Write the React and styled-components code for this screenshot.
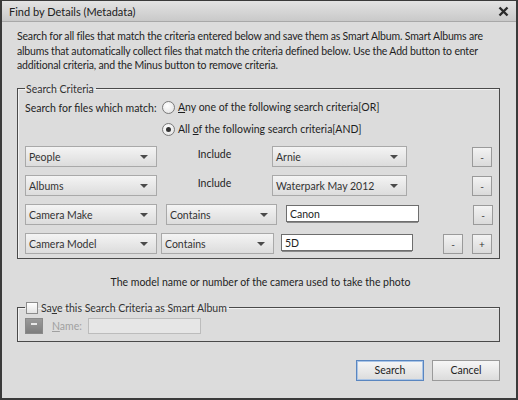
import React, { useState } from "react";
import styled, { createGlobalStyle } from "styled-components";

const GlobalStyle = createGlobalStyle`
  html, body {
    margin: 0;
    padding: 0;
    background: #3c3c3c;
  }
  body {
    font-family: Lato, "Open Sans", sans-serif;
    font-size: 10.5px;
    color: #1e1e1e;
  }
`;

const Dialog = styled.div`
  width: 518px;
  height: 400px;
  box-sizing: border-box;
  border: 2px solid #3a3a3a;
  border-top-width: 1px;
  background: #dcdcdc;
  display: flex;
  flex-direction: column;
`;

const TitleBar = styled.div`
  height: 20px;
  display: flex;
  align-items: center;
  justify-content: space-between;
  padding: 0 6px 0 7px;
  background: linear-gradient(#e3e3e3, #c9c9c9);
  border-bottom: 1px solid #a8a8a8;
  flex-shrink: 0;
`;

const Title = styled.span`
  font-size: 11px;
  color: #202020;
`;

const CloseButton = styled.button`
  border: 0;
  background: transparent;
  padding: 0;
  width: 14px;
  height: 14px;
  display: flex;
  align-items: center;
  justify-content: center;
  cursor: pointer;
`;

const Body = styled.div`
  flex: 1;
  padding: 7px 16px 0 15px;
  display: flex;
  flex-direction: column;
`;

const Intro = styled.p`
  margin: 0;
  line-height: 14.5px;
  letter-spacing: -0.18px;
  white-space: nowrap;
`;

const Group = styled.fieldset`
  margin: ${(p) => p.$mt}px 0 0 0;
  padding: ${(p) => p.$pad};
  border: 1px solid #4a4a4a;
  box-shadow: inset 1px 1px 0 #f2f2f2;
  min-width: 0;
`;

const Legend = styled.legend`
  padding: 0 2px 0 1px;
  margin-left: 0;
  color: #333;
  display: flex;
  align-items: center;
  gap: 3px;
`;

const MatchRow = styled.div`
  display: flex;
  align-items: flex-start;
`;

const MatchLabel = styled.span`
  width: 137px;
  padding-top: 1px;
`;

const RadioList = styled.div`
  display: flex;
  flex-direction: column;
  gap: 9px;
`;

const RadioItem = styled.label`
  display: flex;
  align-items: center;
  gap: 3px;
`;

const RadioCircle = styled.span`
  width: 11px;
  height: 11px;
  border-radius: 50%;
  border: 1px solid #7a7a7a;
  background: radial-gradient(circle at 40% 35%, #ffffff, #dedede);
  display: flex;
  align-items: center;
  justify-content: center;
  &::after {
    content: "";
    width: 5px;
    height: 5px;
    border-radius: 50%;
    background: ${(p) => (p.$on ? "#333" : "transparent")};
  }
`;

const Rows = styled.div`
  margin-top: 11px;
  display: flex;
  flex-direction: column;
  gap: 9px;
`;

const Row = styled.div`
  display: flex;
  align-items: center;
  height: 20px;
`;

const Select = styled.div`
  box-sizing: border-box;
  width: ${(p) => p.$w}px;
  height: 21px;
  margin-left: ${(p) => p.$ml || 0}px;
  border: 1px solid #a9a9a9;
  background: linear-gradient(#f4f4f4, #dcdcdc);
  display: flex;
  align-items: center;
  justify-content: space-between;
  padding: 0 8px 0 3px;
  color: #333;
  flex-shrink: 0;
  &::after {
    content: "";
    border-left: 4px solid transparent;
    border-right: 4px solid transparent;
    border-top: 4px solid #4a4a4a;
    margin-top: 1px;
  }
`;

const Include = styled.span`
  width: ${(p) => p.$w}px;
  text-align: center;
  margin-top: -6px;
  flex-shrink: 0;
`;

const TextBox = styled.div`
  box-sizing: border-box;
  width: ${(p) => p.$w}px;
  height: 17px;
  margin-left: ${(p) => p.$ml}px;
  margin-top: -2px;
  border: 1px solid #6e6e6e;
  background: #fff;
  padding: 0 3px;
  display: flex;
  align-items: center;
  box-shadow: 0 2px 0 -1px #8a8a8a;
  flex-shrink: 0;
`;

const SmallButton = styled.button`
  box-sizing: border-box;
  width: 20px;
  height: 20px;
  margin-left: ${(p) => p.$ml}px;
  padding: 0;
  border: 1px solid #9a9a9a;
  background: linear-gradient(#f3f3f3, #dadada);
  font-family: inherit;
  font-size: 10px;
  color: #333;
  line-height: 1;
  flex-shrink: 0;
`;

const Hint = styled.div`
  text-align: center;
  margin-top: 17px;
  padding-left: 4px;
`;

const CheckBox = styled.span`
  width: 10px;
  height: 10px;
  border: 1px solid #8c8c8c;
  background: linear-gradient(#ffffff, #e4e4e4);
`;

const NameRow = styled.div`
  display: flex;
  align-items: center;
  height: 16px;
`;

const IconButton = styled.span`
  width: 18px;
  height: 16px;
  box-sizing: border-box;
  background: linear-gradient(#9a9a9a, #7e7e7e);
  border: 1px solid #8a8a8a;
  display: flex;
  align-items: center;
  justify-content: center;
  &::after {
    content: "";
    width: 6px;
    height: 2px;
    background: #e8e8e8;
    margin-top: -3px;
  }
`;

const NameLabel = styled.span`
  color: #a0a0a0;
  margin-left: 9px;
  width: 36px;
`;

const NameInput = styled.span`
  box-sizing: border-box;
  width: 113px;
  height: 16px;
  border: 1px solid #bcbcbc;
  background: #e6e6e6;
`;

const Footer = styled.div`
  display: flex;
  justify-content: flex-end;
  gap: 8px;
  margin-top: 18px;
`;

const DialogButton = styled.button`
  box-sizing: border-box;
  width: 68px;
  height: 21px;
  border: 1px solid ${(p) => (p.$primary ? "#5a86c0" : "#9a9a9a")};
  box-shadow: ${(p) => (p.$primary ? "inset 0 0 0 1px #a9c4e6" : "none")};
  background: linear-gradient(#f6f6f6, #dcdcdc);
  font-family: inherit;
  font-size: 10.5px;
  color: #222;
  padding: 0;
`;

const U = styled.span`
  text-decoration: underline;
`;

const criteria = [
  { field: "People", fw: 132, op: "Include", value: "Arnie", vw: 135 },
  { field: "Albums", fw: 132, op: "Include", value: "Waterpark May 2012", vw: 135 },
];

export default function App() {
  const [mode, setMode] = useState("and");

  return (
    <>
      <GlobalStyle />
      <Dialog>
        <TitleBar>
          <Title>Find by Details (Metadata)</Title>
          <CloseButton aria-label="Close">
            <svg width="11" height="11" viewBox="0 0 11 11">
              <path d="M1.5 1.5 L9.5 9.5 M9.5 1.5 L1.5 9.5" stroke="#2a2a2a" strokeWidth="2.4" />
            </svg>
          </CloseButton>
        </TitleBar>
        <Body>
          <Intro>
            Search for all files that match the criteria entered below and save them as Smart Album. Smart Albums are
            <br />
            albums that automatically collect files that match the criteria defined below. Use the Add button to enter
            <br />
            additional criteria, and the Minus button to remove criteria.
          </Intro>

          <Group $mt={10} $pad="6px 7px 4px 7px">
            <Legend>Search Criteria</Legend>
            <MatchRow>
              <MatchLabel>Search for files which match:</MatchLabel>
              <RadioList>
                <RadioItem onClick={() => setMode("or")}>
                  <RadioCircle $on={mode === "or"} />
                  <span>
                    <U>A</U>ny one of the following search criteria[OR]
                  </span>
                </RadioItem>
                <RadioItem onClick={() => setMode("and")}>
                  <RadioCircle $on={mode === "and"} />
                  <span>
                    All <U>o</U>f the following search criteria[AND]
                  </span>
                </RadioItem>
              </RadioList>
            </MatchRow>

            <Rows>
              {criteria.map((c) => (
                <Row key={c.field}>
                  <Select $w={c.fw}>{c.field}</Select>
                  <Include $w={115}>{c.op}</Include>
                  <Select $w={c.vw}>{c.value}</Select>
                  <SmallButton $ml={65}>-</SmallButton>
                </Row>
              ))}
              <Row>
                <Select $w={132}>Camera Make</Select>
                <Select $w={111} $ml={9}>Contains</Select>
                <TextBox $w={133} $ml={9}>Canon</TextBox>
                <SmallButton $ml={54}>-</SmallButton>
              </Row>
              <Row>
                <Select $w={132}>Camera Model</Select>
                <Select $w={113} $ml={4}>Contains</Select>
                <TextBox $w={132} $ml={7}>5D</TextBox>
                <SmallButton $ml={30}>-</SmallButton>
                <SmallButton $ml={9}>+</SmallButton>
              </Row>
            </Rows>
          </Group>

          <Hint>The model name or number of the camera used to take the photo</Hint>

          <Group $mt={14} $pad="4px 7px 7px 7px">
            <Legend>
              <CheckBox />
              <span>
                Sa<U>v</U>e this Search Criteria as Smart Album
              </span>
            </Legend>
            <NameRow>
              <IconButton />
              <NameLabel>
                <U>N</U>ame:
              </NameLabel>
              <NameInput />
            </NameRow>
          </Group>

          <Footer>
            <DialogButton $primary>Search</DialogButton>
            <DialogButton>Cancel</DialogButton>
          </Footer>
        </Body>
      </Dialog>
    </>
  );
}
